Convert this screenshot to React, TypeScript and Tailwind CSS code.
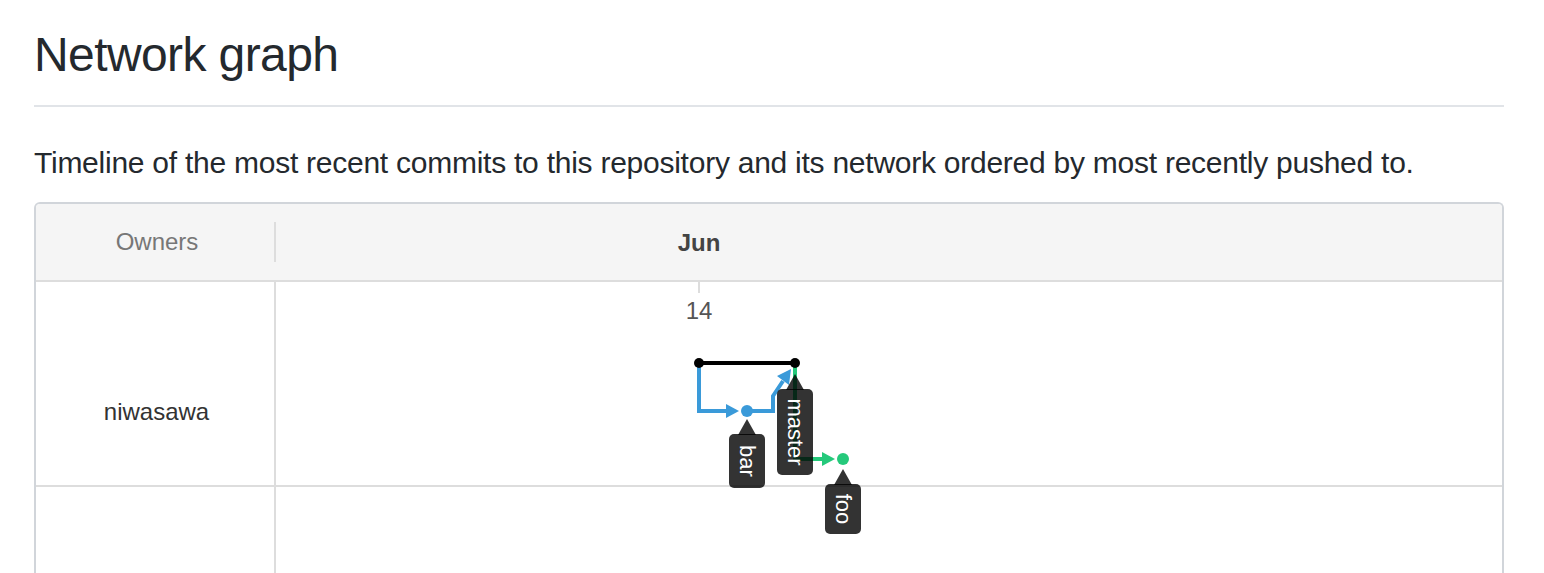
import React from 'react';

const BLUE = '#3a9ad9';
const GREEN = '#25c97b';
const LABEL = 'rgba(0,0,0,0.8)';

interface BranchLabel {
  name: string;
  x: number;
  y: number;
  h: number;
}

// refs in page coords, svg is shifted back by the box origin
const labels: BranchLabel[] = [
  { name: 'bar', x: 747, y: 434, h: 54 },
  { name: 'master', x: 795, y: 389, h: 86 },
  { name: 'foo', x: 843, y: 484, h: 50 },
];

const Graph: React.FC = () => (
  <svg className="absolute left-0 top-0 w-full h-full pointer-events-none overflow-visible">
    <g transform="translate(-36,-204)" style={{ fontFamily: '"Liberation Sans", Arial, sans-serif' }}>
      <text x={699} y={251} textAnchor="middle" fontSize={24} fontWeight={700} fill="#444">Jun</text>
      <line x1={699} y1={282} x2={699} y2={293} stroke="#ddd" strokeWidth={2} />
      <text x={699} y={319} textAnchor="middle" fontSize={24} fill="#555">14</text>

      {/* bar branch */}
      <path d="M699 363 V411 H728" fill="none" stroke={BLUE} strokeWidth={4} />
      <polygon points="726,404 739,411 726,418" fill={BLUE} />
      <path d="M747 411 H773 V396 L783 381" fill="none" stroke={BLUE} strokeWidth={4} strokeLinejoin="miter" />
      <polygon points="791,369 789,385 777,376" fill={BLUE} />
      <circle cx={747} cy={411} r={6} fill={BLUE} />

      {/* foo branch */}
      <path d="M795 366 V459 H824" fill="none" stroke={GREEN} strokeWidth={4} />
      <polygon points="822,452 835,459 822,466" fill={GREEN} />
      <circle cx={843} cy={459} r={6} fill={GREEN} />

      {/* master */}
      <line x1={699} y1={363} x2={795} y2={363} stroke="#000" strokeWidth={4} />
      <circle cx={699} cy={363} r={5} fill="#000" />
      <circle cx={795} cy={363} r={5} fill="#000" />

      {labels.map((l) => (
        <g key={l.name}>
          <polygon points={`${l.x - 9},${l.y + 1} ${l.x},${l.y - 15} ${l.x + 9},${l.y + 1}`} fill={LABEL} />
          <rect x={l.x - 18} y={l.y} width={36} height={l.h} rx={5} fill={LABEL} />
          <text
            transform={`translate(${l.x},${l.y + l.h / 2}) rotate(90)`}
            textAnchor="middle"
            dominantBaseline="central"
            fontSize={22}
            fill="#fff"
          >
            {l.name}
          </text>
        </g>
      ))}
    </g>
  </svg>
);

export default function App() {
  return (
    <div className="min-h-screen bg-white pl-[34px] pr-[40px] pt-[25px]" style={{ fontFamily: '"Liberation Sans", Arial, sans-serif' }}>
      <h1 className="text-[48px] leading-[60px] tracking-[-0.6px] font-normal text-[#24292e] pb-[20px] border-b-2 border-[#e1e4e8]">
        Network graph
      </h1>
      <p className="mt-[33px] text-[30px] leading-[45px] tracking-[-0.25px] text-[#24292e] whitespace-nowrap">
        Timeline of the most recent commits to this repository and its network ordered by most recently pushed to.
      </p>

      <div className="relative mt-[17px] border-2 border-b-0 border-[#d1d5da] rounded-t-[6px] overflow-hidden">
        <div className="flex h-[78px] bg-[#f5f5f5] border-b-2 border-[#ddd]">
          <div className="w-[238px] pl-[4px] flex items-center justify-center text-[24px] text-[#777]">Owners</div>
          <div className="self-center w-[2px] h-[40px] bg-[#ddd]" />
          <div className="flex-1" />
        </div>

        <div className="flex h-[205px] border-b-2 border-[#ddd]">
          <div className="w-[235px] pl-[3px] box-content flex items-center justify-center pt-[56px] text-[24px] text-[#333] border-r-2 border-[#ddd]">
            niwasawa
          </div>
          <div className="flex-1" />
        </div>

        <div className="flex h-[200px]">
          <div className="w-[238px] border-r-2 border-[#ddd] box-content" />
          <div className="flex-1" />
        </div>

        <Graph />
      </div>
    </div>
  );
}
